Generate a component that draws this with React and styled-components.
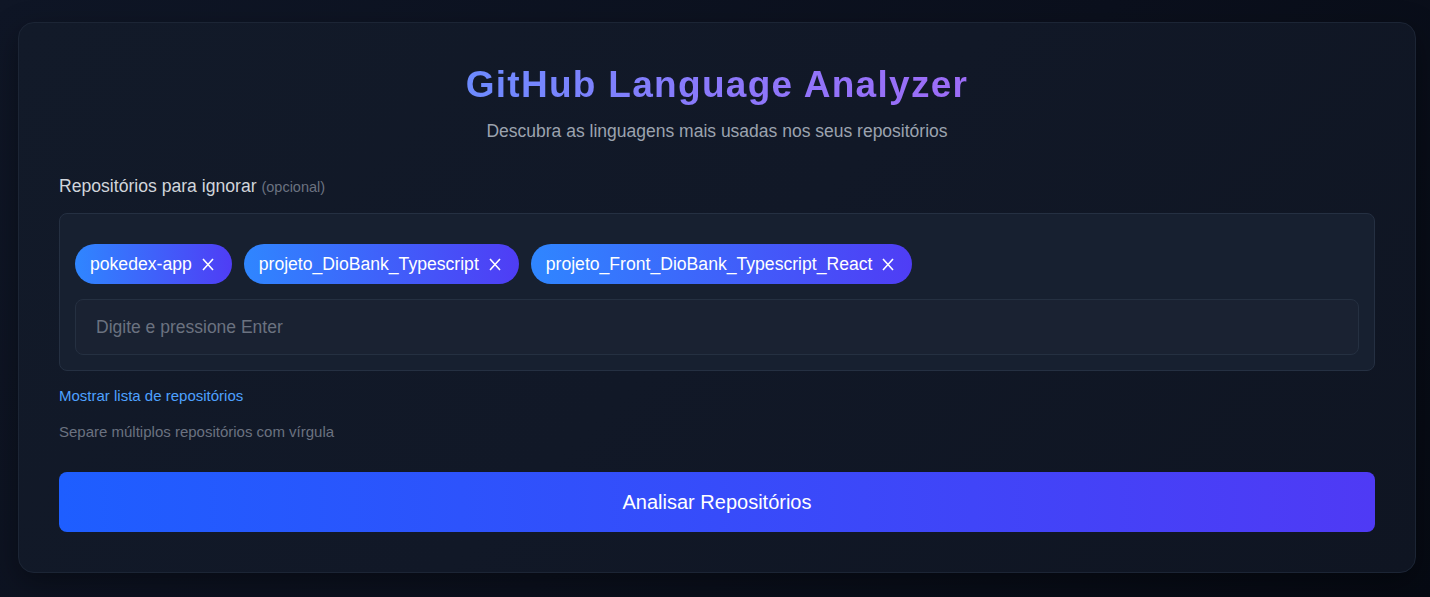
import React, { useState } from "react";
import styled, { createGlobalStyle } from "styled-components";

const GlobalStyle = createGlobalStyle`
  * { box-sizing: border-box; }
  html, body {
    margin: 0;
    padding: 0;
    min-height: 100%;
  }
  body {
    font-family: "Liberation Sans", Arial, sans-serif;
    background: linear-gradient(135deg, #0f1626 0%, #0b101d 55%, #060a13 100%);
    min-height: 597px;
    color: #e5e7eb;
  }
`;

const Page = styled.div`
  padding: 22px 14px 25px 18px;
`;

const Card = styled.section`
  background: linear-gradient(135deg, #121a29 0%, #111827 50%, #0f1522 100%);
  border: 1px solid #1c2535;
  border-radius: 16px;
  padding: 40px;
  box-shadow: 0 10px 30px rgba(0, 0, 0, 0.35);
`;

const Header = styled.header`
  text-align: center;
  margin-bottom: 32px;
`;

const Title = styled.h1`
  margin: 0 0 12px;
  font-size: 37px;
  line-height: 44px;
  font-weight: 700;
  letter-spacing: 1.3px;
  background: linear-gradient(90deg, #6d8bff 0%, #8b78fb 50%, #9d6cf7 100%);
  -webkit-background-clip: text;
  background-clip: text;
  color: transparent;
  display: inline-block;
`;

const Subtitle = styled.p`
  margin: 0;
  font-size: 17.5px;
  line-height: 24px;
  color: #9ca3af;
`;

const Label = styled.label`
  display: block;
  font-size: 17.6px;
  line-height: 22px;
  color: #d1d5db;
  margin-bottom: 15px;

  small {
    font-size: 14.5px;
    color: #6b7280;
  }
`;

const TagBox = styled.div`
  background: #172030;
  border: 1px solid #253042;
  border-radius: 8px;
  padding: 30px 15px 15px;
`;

const TagList = styled.div`
  display: flex;
  flex-wrap: wrap;
  gap: 12px;
  margin-bottom: 15px;
`;

const Tag = styled.span`
  display: inline-flex;
  align-items: center;
  height: 40px;
  padding: 0 16px 0 15px;
  border-radius: 20px;
  background: linear-gradient(90deg, #2f86ff 0%, #4f3df5 100%);
  color: #ffffff;
  font-size: 17.6px;
`;

const RemoveButton = styled.button`
  display: inline-flex;
  align-items: center;
  justify-content: center;
  width: 16px;
  height: 16px;
  margin-left: 8px;
  padding: 0;
  border: none;
  background: none;
  color: #ffffff;
  cursor: pointer;
`;

const Input = styled.input`
  width: 100%;
  height: 56px;
  padding: 0 20px;
  background: #1a2232;
  border: 1px solid #253041;
  border-radius: 8px;
  color: #e5e7eb;
  font-family: inherit;
  font-size: 17.5px;
  outline: none;

  &::placeholder {
    color: #6b7280;
  }
`;

const LinkButton = styled.button`
  display: block;
  margin: 16px 0 0;
  padding: 0;
  border: none;
  background: none;
  color: #4ea1ff;
  font-family: inherit;
  font-size: 15px;
  line-height: 18px;
  cursor: pointer;
`;

const Hint = styled.p`
  margin: 18px 0 0;
  font-size: 15px;
  line-height: 18px;
  color: #6b7280;
`;

const SubmitButton = styled.button`
  display: block;
  width: 100%;
  height: 60px;
  margin-top: 31px;
  border: none;
  border-radius: 8px;
  background: linear-gradient(90deg, #1e5eff 0%, #4f3af5 100%);
  color: #ffffff;
  font-family: inherit;
  font-size: 20px;
  cursor: pointer;
`;

const CloseIcon = () => (
  <svg width="12" height="13" viewBox="0 0 12 13" fill="none">
    <path d="M1 1L11 12M11 1L1 12" stroke="currentColor" strokeWidth="1.6" />
  </svg>
);

const initialTags = [
  "pokedex-app",
  "projeto_DioBank_Typescript",
  "projeto_Front_DioBank_Typescript_React",
];

const App = () => {
  const [tags, setTags] = useState(initialTags);
  const [value, setValue] = useState("");

  const handleKey = (e) => {
    if (e.key === "Enter" && value.trim()) {
      setTags([...tags, value.trim()]);
      setValue("");
    }
  };

  return (
    <>
      <GlobalStyle />
      <Page>
        <Card>
          <Header>
            <Title>GitHub Language Analyzer</Title>
            <Subtitle>Descubra as linguagens mais usadas nos seus repositórios</Subtitle>
          </Header>

          <Label>
            Repositórios para ignorar <small>(opcional)</small>
          </Label>
          <TagBox>
            <TagList>
              {tags.map((t) => (
                <Tag key={t}>
                  {t}
                  <RemoveButton onClick={() => setTags(tags.filter((x) => x !== t))}>
                    <CloseIcon />
                  </RemoveButton>
                </Tag>
              ))}
            </TagList>
            <Input
              placeholder="Digite e pressione Enter"
              value={value}
              onChange={(e) => setValue(e.target.value)}
              onKeyDown={handleKey}
            />
          </TagBox>

          <LinkButton>Mostrar lista de repositórios</LinkButton>
          <Hint>Separe múltiplos repositórios com vírgula</Hint>

          <SubmitButton>Analisar Repositórios</SubmitButton>
        </Card>
      </Page>
    </>
  );
};

export default App;
